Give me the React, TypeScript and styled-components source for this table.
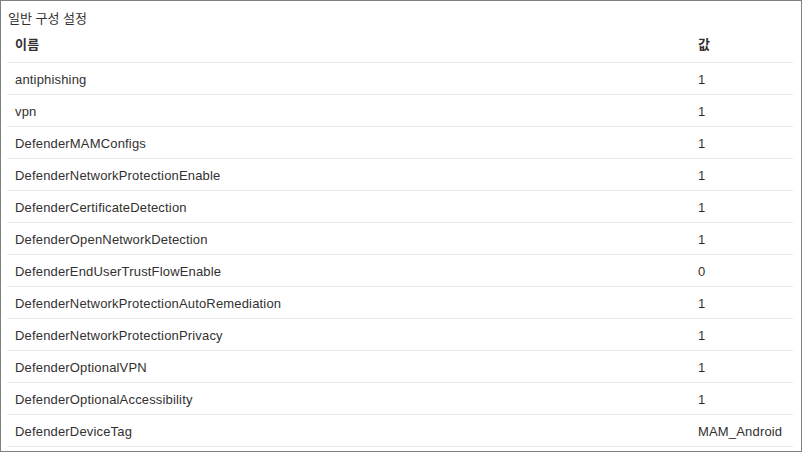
import React from "react";
import styled, { createGlobalStyle } from "styled-components";

const Global = createGlobalStyle`
  html, body { margin: 0; padding: 0; background: #fff; }
  * { box-sizing: border-box; }
`;

const Frame = styled.div`
  width: 802px;
  height: 452px;
  border: 1px solid #808080;
  padding: 7px 8px 0 6px;
  font-family: "Segoe UI", "Liberation Sans", "Noto Sans CJK KR", sans-serif;
  font-size: 13px;
  letter-spacing: 0.17px;
  color: #323130;
  overflow: hidden;
`;

const Title = styled.div`
  height: 21px;
  line-height: 21px;
  padding-left: 1px;
  letter-spacing: 0;
`;

const Table = styled.div`
  display: grid;
  grid-template-columns: 683px 1fr;
`;

const Cell = styled.div<{ $head?: boolean }>`
  height: ${(p) => (p.$head ? 34 : 32)}px;
  line-height: ${(p) => (p.$head ? 31 : 34)}px;
  padding-left: 8px;
  border-bottom: 1px solid #edebe9;
  font-weight: ${(p) => (p.$head ? 700 : 400)};
  white-space: nowrap;
  overflow: hidden;
`;

const rows: [string, string][] = [
  ["antiphishing", "1"],
  ["vpn", "1"],
  ["DefenderMAMConfigs", "1"],
  ["DefenderNetworkProtectionEnable", "1"],
  ["DefenderCertificateDetection", "1"],
  ["DefenderOpenNetworkDetection", "1"],
  ["DefenderEndUserTrustFlowEnable", "0"],
  ["DefenderNetworkProtectionAutoRemediation", "1"],
  ["DefenderNetworkProtectionPrivacy", "1"],
  ["DefenderOptionalVPN", "1"],
  ["DefenderOptionalAccessibility", "1"],
  ["DefenderDeviceTag", "MAM_Android"],
];

export default function App() {
  return (
    <>
      <Global />
      <Frame>
        <Title>일반 구성 설정</Title>
        <Table>
          <Cell $head>이름</Cell>
          <Cell $head>값</Cell>
          {rows.map(([k, v]) => (
            <React.Fragment key={k}>
              <Cell>{k}</Cell>
              <Cell>{v}</Cell>
            </React.Fragment>
          ))}
        </Table>
      </Frame>
    </>
  );
}
